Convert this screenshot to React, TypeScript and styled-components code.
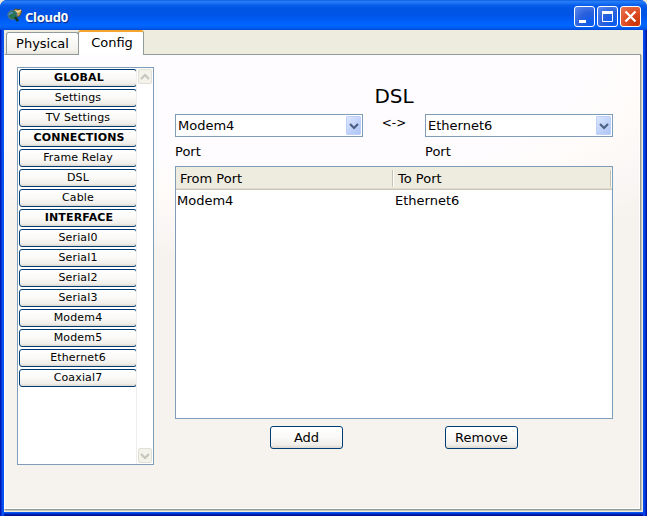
import React from "react";
import styled, { createGlobalStyle, css } from "styled-components";

const GlobalStyle = createGlobalStyle`
  * { box-sizing: border-box; }
  body { margin: 0; background: #ece9d8; overflow: hidden; }
  button { font: inherit; color: inherit; padding: 0; margin: 0; }
`;

const Window = styled.div`
  width: 647px;
  height: 516px;
  display: flex;
  flex-direction: column;
  overflow: hidden;
  border-radius: 7px 7px 0 0;
  background: #0a48e8;
  color: #000;
  font: 13px/16px Verdana, "DejaVu Sans", sans-serif;
`;

const TitleBar = styled.header`
  height: 30px;
  flex: none;
  display: flex;
  align-items: flex-start;
  padding: 6px 6px 0 7px;
  background: linear-gradient(180deg, #0250d8 0, #2a80fa 1px, #1c74f4 3px, #0a5fec 5px, #0055e5 8px, #0055e6 15px, #005df6 20px, #0066ff 25px, #005cf2 28px, #0048d4 30px);
`;

const WindowTitle = styled.h1`
  margin: 2px 0 0 2px;
  flex: 1;
  color: #fff;
  font: bold 13px/18px "Trebuchet MS", "Noto Sans", sans-serif;
  letter-spacing: -0.25px;
  text-shadow: 1px 1px 1px #0c2a88;
`;

const Controls = styled.div`
  display: flex;
  gap: 2px;
`;

const Control = styled.button<{ $close?: boolean }>`
  width: 21px;
  height: 21px;
  border: 1px solid #fff;
  border-radius: 3px;
  background: ${(p) =>
    p.$close
      ? "radial-gradient(circle at 80% 85%, #c93508 0, #dd4a22 45%, #e97656 100%)"
      : "radial-gradient(circle at 80% 85%, #0a5af0 0, #2960dc 50%, #5c8bf0 100%)"};
  svg { display: block; }
`;

const Frame = styled.div`
  flex: 1;
  min-height: 0;
  display: flex;
  padding: 0 4px 4px;
  background: linear-gradient(90deg, #0010a0 0, #0020c8 1px, #0a4cec 2px, #0855f0 4px, transparent 4px, transparent 643px, #0048f0 643px, #0040e8 645px, #0018a0 646px),
    linear-gradient(180deg, #0855f0 0, #0855f0 483px, #0020b8 484px, #00108a 486px);
`;

const Client = styled.div`
  flex: 1;
  display: flex;
  flex-direction: column;
  background: #eeebdf;
  padding: 0 2px 2px 0;
`;

const Tabs = styled.nav`
  height: 24px;
  flex: none;
  display: flex;
  align-items: flex-end;
  padding-left: 2px;
`;

const Tab = styled.button<{ $active?: boolean }>`
  border: 1px solid #919b9c;
  border-bottom: 0;
  border-radius: 3px 3px 0 0;
  ${(p) =>
    p.$active
      ? css`
          width: 66px;
          height: 25px;
          margin: 0 0 -1px -1px;
          background: #fff;
          border-top: 2px solid #f5a42c;
          padding: 0 0 1px 2px;
          z-index: 1;
        `
      : css`
          width: 73px;
          height: 22px;
          background: linear-gradient(#fff, #f4f3ee 80%, #e8e5da);
          padding-top: 1px;
        `}
`;

const Page = styled.main`
  flex: 1;
  min-height: 0;
  display: flex;
  align-items: flex-start;
  gap: 21px;
  padding: 12px 0 0 12px;
  border: 1px solid #919b9c;
  border-left-color: #fff;
  box-shadow: inset -1px -1px #fff, 1px 1px #cbc7b8;
  background: radial-gradient(ellipse 460px 215px at 50% 0, #fefcff 0, #fefcff 55%, #fffbf9 72%, #f9f6f5 88%, #f6f3ee 100%);
`;

const Sidebar = styled.aside`
  width: 137px;
  height: 398px;
  display: flex;
  border: 1px solid #7f9db9;
  background: #fff;
`;

const Items = styled.div`
  width: 119px;
  display: flex;
  flex-direction: column;
  gap: 2px;
  padding: 1px 0 0 1px;
  border-right: 1px solid #eeeeea;
  overflow: hidden;
`;

const xpButton = css`
  border: 1px solid #003c74;
  border-radius: 3px;
  background: linear-gradient(#fff, #faf9f7 50%, #f0eeea 85%, #ddd8ce);
`;

const Item = styled.button<{ $heading?: boolean }>`
  ${xpButton}
  width: 118px;
  height: 18px;
  flex: none;
  padding-left: ${(p) => (p.$heading ? 2 : 0)}px;
  font-size: 11px;
  line-height: 16px;
  font-weight: ${(p) => (p.$heading ? 700 : 400)};
  letter-spacing: 0.15px;
`;

const Scrollbar = styled.div`
  width: 16px;
  display: flex;
  flex-direction: column;
  justify-content: space-between;
  align-items: center;
  padding: 1px 0 1px 0;
`;

const Arrow = styled.button`
  width: 14px;
  height: 15px;
  border: 1px solid #e2e0d2;
  border-radius: 2px;
  background: #f3f2eb;
  svg { display: block; margin: auto; }
`;

const Editor = styled.section`
  width: 438px;
  display: flex;
  flex-direction: column;
`;

const Heading = styled.h2`
  margin: 17px 0 6px;
  height: 24px;
  font-size: 20px;
  line-height: 24px;
  font-weight: 400;
  text-align: center;
`;

const Ports = styled.div`
  height: 52px;
  display: flex;
`;

const PortField = styled.label`
  width: 188px;
  display: flex;
  flex-direction: column;
  gap: 7px;
`;

const Combo = styled.span`
  height: 23px;
  display: flex;
  align-items: center;
  justify-content: space-between;
  padding: 0 1px 0 2px;
  border: 1px solid #7f9db9;
  background: #fff;
`;

const Drop = styled.span`
  width: 15px;
  height: 19px;
  display: grid;
  place-items: center;
  border: 1px solid #bfd0f8;
  border-radius: 1px;
  background: linear-gradient(135deg, #dce7ff, #bed1fa 60%, #aec5f5);
`;

const Between = styled.span`
  width: 62px;
  padding-top: 1px;
  text-align: center;
  font-size: 12px;
`;

const Table = styled.div`
  height: 253px;
  border: 1px solid #7f9db9;
  background: #fff;
`;

const Row = styled.div<{ $head?: boolean }>`
  display: grid;
  grid-template-columns: 218px 218px;
  height: ${(p) => (p.$head ? 23 : 21)}px;
  ${(p) =>
    p.$head &&
    css`
      background: #eeebdf;
      box-shadow: inset 0 -1px #cbc7b8, inset 0 -2px #dedacb;
    `}
`;

const HeadCell = styled.span`
  height: 17px;
  margin-top: 3px;
  padding-left: 4px;
  line-height: 18px;
  border-right: 1px solid #fff;
  box-shadow: inset -1px 0 #c5c2b3;
`;

const Cell = styled.span`
  padding-left: 1px;
  line-height: 21px;
`;

const Actions = styled.div`
  display: flex;
  gap: 102px;
  padding: 7px 0 0 95px;
`;

const Action = styled.button`
  ${xpButton}
  width: 73px;
  height: 23px;
`;

const entries: { label: string; heading?: boolean }[] = [
  { label: "GLOBAL", heading: true },
  { label: "Settings" },
  { label: "TV Settings" },
  { label: "CONNECTIONS", heading: true },
  { label: "Frame Relay" },
  { label: "DSL" },
  { label: "Cable" },
  { label: "INTERFACE", heading: true },
  { label: "Serial0" },
  { label: "Serial1" },
  { label: "Serial2" },
  { label: "Serial3" },
  { label: "Modem4" },
  { label: "Modem5" },
  { label: "Ethernet6" },
  { label: "Coaxial7" },
];

function Chevron({ up, color, width = 10 }: { up?: boolean; color: string; width?: number }) {
  return (
    <svg width={width} height={8} viewBox="0 0 10 8">
      <path d={up ? "M1 6 5 2 9 6" : "M1 2 5 6 9 2"} fill="none" stroke={color} strokeWidth="2.2" />
    </svg>
  );
}

function AppIcon() {
  return (
    <svg width="16" height="17" viewBox="0 0 16 17">
      <path d="M6 5 8 3l6 1 0.500 2-2 4-4 1z" fill="#c2a04a" stroke="#5c5028" />
      <path d="m8 5 3 1 3-2" fill="none" stroke="#f5dda0" strokeWidth="1.4" />
      <circle cx="5.500" cy="9" r="4.500" fill="#267454" stroke="#4d7098" strokeWidth="1.200" />
      <path d="M2 9q1-3 4-2" fill="none" stroke="#5b92bf" strokeWidth="1.600" />
      <path d="m8 11 3 4" stroke="#17391f" strokeWidth="2.600" />
    </svg>
  );
}

function PortSelect({ value }: { value: string }) {
  return (
    <PortField>
      <Combo>
        {value}
        <Drop><Chevron color="#4d6185" /></Drop>
      </Combo>
      Port
    </PortField>
  );
}

export default function App() {
  return (
    <>
      <GlobalStyle />
      <Window>
        <TitleBar>
          <AppIcon />
          <WindowTitle>Cloud0</WindowTitle>
          <Controls>
            <Control aria-label="Minimize">
              <svg width="19" height="19"><path d="M4 13h7v3H4z" fill="#fff" /></svg>
            </Control>
            <Control aria-label="Maximize">
              <svg width="19" height="19"><path d="M4.500 5.500h10v9h-10z" fill="none" stroke="#fff" /><path d="M4 4h11v3H4z" fill="#fff" /></svg>
            </Control>
            <Control $close aria-label="Close">
              <svg width="19" height="19"><path d="m4.500 4.500 10 10m0-10-10 10" stroke="#fff" strokeWidth="2.300" /></svg>
            </Control>
          </Controls>
        </TitleBar>
        <Frame>
          <Client>
            <Tabs>
              <Tab>Physical</Tab>
              <Tab $active>Config</Tab>
            </Tabs>
            <Page>
              <Sidebar>
                <Items>
                  {entries.map((e) => (
                    <Item key={e.label} $heading={e.heading}>{e.label}</Item>
                  ))}
                </Items>
                <Scrollbar>
                  <Arrow aria-label="Scroll up"><Chevron up color="#c8c7bd" /></Arrow>
                  <Arrow aria-label="Scroll down"><Chevron color="#c8c7bd" /></Arrow>
                </Scrollbar>
              </Sidebar>
              <Editor>
                <Heading>DSL</Heading>
                <Ports>
                  <PortSelect value="Modem4" />
                  <Between>&lt;-&gt;</Between>
                  <PortSelect value="Ethernet6" />
                </Ports>
                <Table>
                  <Row $head><HeadCell>From Port</HeadCell><HeadCell>To Port</HeadCell></Row>
                  <Row><Cell>Modem4</Cell><Cell>Ethernet6</Cell></Row>
                </Table>
                <Actions>
                  <Action>Add</Action>
                  <Action>Remove</Action>
                </Actions>
              </Editor>
            </Page>
          </Client>
        </Frame>
      </Window>
    </>
  );
}
